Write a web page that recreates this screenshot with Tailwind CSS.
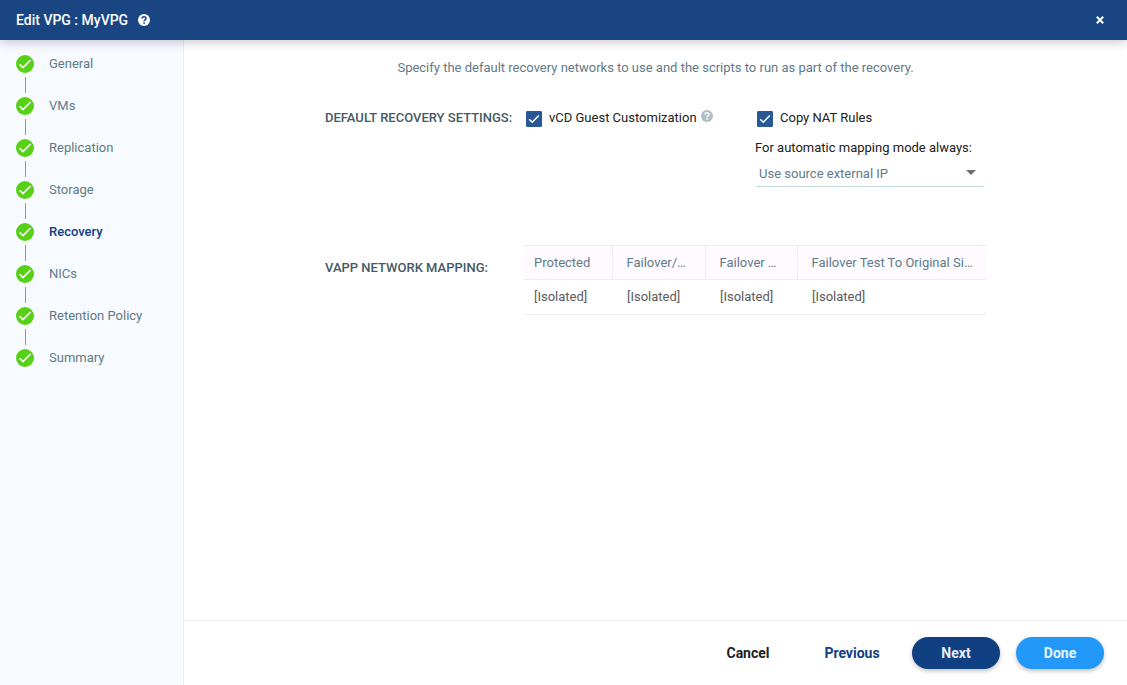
<!DOCTYPE html>
<html lang="en">
<head>
<meta charset="utf-8">
<meta name="viewport" content="width=device-width, initial-scale=1">
<title>Edit VPG : MyVPG</title>
<script src="https://cdn.jsdelivr.net/npm/@tailwindcss/browser@4"></script>
</head>
<body class="flex min-h-screen flex-col bg-white font-['Roboto',sans-serif] text-[13px] leading-5 text-[#212121]">
<svg class="hidden" aria-hidden="true">
  <symbol id="done" viewBox="0 0 18 18">
    <circle cx="9" cy="9" r="9" fill="#57d116"/>
    <path d="M3.6 9.2 7 12.6 14.6 5" fill="none" stroke="#fff" stroke-width="1.6"/>
  </symbol>
  <symbol id="help" viewBox="0 0 12 12">
    <circle cx="6" cy="6" r="6" fill="currentColor"/>
    <path d="M4 4.5C4.1 2.1 8 2.1 8 4.4 8 5.8 6.1 5.8 6.1 7.3M6.1 8.2V9.8" fill="none" stroke="var(--mark)" stroke-width="1.6"/>
  </symbol>
  <symbol id="tick" viewBox="0 0 16 16">
    <path d="M3.2 8.2 6.3 11.3 12.8 4.6" fill="none" stroke="#fff" stroke-width="1.5"/>
  </symbol>
</svg>

<header class="z-10 flex h-10 items-center bg-[#194683] pr-[19px] pl-4 text-white shadow-[0_2px_10px_rgba(40,20,50,0.25)]">
  <h1 class="text-sm font-medium">Edit VPG : MyVPG</h1>
  <button type="button" aria-label="Help" class="ml-2.5 [--mark:#194683]"><svg class="size-3"><use href="#help"/></svg></button>
  <button type="button" aria-label="Close" class="ml-auto flex size-4 items-center justify-center">
    <svg class="size-2" viewBox="0 0 8 8"><path d="M.8.8 7.2 7.2M7.2.8.8 7.2" stroke="#fff" stroke-width="2"/></svg>
  </button>
</header>

<div class="flex flex-1">
  <nav aria-label="Steps" class="w-46 shrink-0 border-r border-[#e9edf3] bg-[#f7faff] px-4 pt-[14px]">
    <ol class="text-[#5f7a88]">
      <li class="flex h-[42px] gap-[15px]"><span class="flex flex-col items-center gap-1"><svg class="mt-px size-[18px]"><use href="#done"/></svg><span class="h-4 w-px bg-[#8b9ba7]"></span></span><a href="#general">General</a></li>
      <li class="flex h-[42px] gap-[15px]"><span class="flex flex-col items-center gap-1"><svg class="mt-px size-[18px]"><use href="#done"/></svg><span class="h-4 w-px bg-[#8b9ba7]"></span></span><a href="#vms">VMs</a></li>
      <li class="flex h-[42px] gap-[15px]"><span class="flex flex-col items-center gap-1"><svg class="mt-px size-[18px]"><use href="#done"/></svg><span class="h-4 w-px bg-[#8b9ba7]"></span></span><a href="#replication">Replication</a></li>
      <li class="flex h-[42px] gap-[15px]"><span class="flex flex-col items-center gap-1"><svg class="mt-px size-[18px]"><use href="#done"/></svg><span class="h-4 w-px bg-[#8b9ba7]"></span></span><a href="#storage">Storage</a></li>
      <li class="flex h-[42px] gap-[15px]"><span class="flex flex-col items-center gap-1"><svg class="mt-px size-[18px]"><use href="#done"/></svg><span class="h-4 w-px bg-[#8b9ba7]"></span></span><a href="#recovery" aria-current="step" class="font-medium text-[#104082]">Recovery</a></li>
      <li class="flex h-[42px] gap-[15px]"><span class="flex flex-col items-center gap-1"><svg class="mt-px size-[18px]"><use href="#done"/></svg><span class="h-4 w-px bg-[#8b9ba7]"></span></span><a href="#nics">NICs</a></li>
      <li class="flex h-[42px] gap-[15px]"><span class="flex flex-col items-center gap-1"><svg class="mt-px size-[18px]"><use href="#done"/></svg><span class="h-4 w-px bg-[#8b9ba7]"></span></span><a href="#retention">Retention Policy</a></li>
      <li class="flex h-[42px] gap-[15px]"><span class="flex flex-col items-center"><svg class="mt-px size-[18px]"><use href="#done"/></svg></span><a href="#summary">Summary</a></li>
    </ol>
  </nav>

  <div class="flex min-w-0 flex-1 flex-col">
    <main class="flex-1 pt-[18px]">
      <p class="text-center text-[#5f7a88]">Specify the default recovery networks to use and the scripts to run as part of the recovery.</p>

      <div class="mx-auto max-w-[661px]">
        <section class="mt-[30px] flex">
          <h2 class="w-[199px] shrink-0 font-medium text-[#455a64]">DEFAULT RECOVERY SETTINGS:</h2>
          <div class="flex w-[231px] shrink-0 items-start pl-0.5">
            <label class="flex text-[#212121]">
              <span class="mt-[3px] mr-[7px] grid size-4"><input type="checkbox" checked class="peer col-start-1 row-start-1 size-4 appearance-none rounded-[1px] border border-[#285996] checked:bg-[#285996]"><svg class="pointer-events-none invisible col-start-1 row-start-1 size-4 peer-checked:visible"><use href="#tick"/></svg></span>
              vCD Guest Customization
            </label>
            <button type="button" aria-label="About guest customization" class="mt-0.5 ml-1 text-[#b0bec5] [--mark:#ffffff]"><svg class="size-3"><use href="#help"/></svg></button>
          </div>
          <div class="w-[229px]">
            <label class="flex pl-0.5 text-[#212121]">
              <span class="mt-[3px] mr-[7px] grid size-4"><input type="checkbox" checked class="peer col-start-1 row-start-1 size-4 appearance-none rounded-[1px] border border-[#285996] checked:bg-[#285996]"><svg class="pointer-events-none invisible col-start-1 row-start-1 size-4 peer-checked:visible"><use href="#tick"/></svg></span>
              Copy NAT Rules
            </label>
            <label for="mapping" class="mt-[10px] block text-[#212121]">For automatic mapping mode always:</label>
            <div class="relative ml-px">
              <select id="mapping" class="block h-[29px] w-full appearance-none border-b border-[#c5dadd] pt-1 pr-6 pl-[3px] text-[#5f7a88]"><option>Use source external IP</option></select>
              <svg class="pointer-events-none absolute top-3 right-2 h-[5px] w-[10px]" viewBox="0 0 10 5"><path d="M0 0H10L5 5Z" fill="#6f6f6f"/></svg>
            </div>
          </div>
        </section>

        <section class="mt-[58px] flex">
          <h2 class="w-[199px] shrink-0 pt-[13px] font-medium text-[#455a64]">VAPP NETWORK MAPPING:</h2>
          <table class="w-full table-fixed text-left">
            <colgroup><col class="w-[88px]"><col class="w-[93px]"><col class="w-[92px]"><col></colgroup>
            <thead>
              <tr class="h-[34px] border-y border-[#ebecf5] bg-[#fefaff] text-[#5f7a88]">
                <th class="truncate border-r border-[#ebecf5] pl-[10px] font-normal">Protected</th>
                <th class="truncate border-r border-[#ebecf5] px-[14px] font-normal">Failover/Move</th>
                <th class="truncate border-r border-[#ebecf5] px-[14px] font-normal">Failover Test</th>
                <th class="truncate pr-[10px] pl-[14px] font-normal">Failover Test To Original Site Network</th>
              </tr>
            </thead>
            <tbody>
              <tr class="h-[35px] border-b border-[#ebecf5] text-[#5a5a5a]">
                <td class="pl-[10px]">[Isolated]</td>
                <td class="pl-[15px]">[Isolated]</td>
                <td class="pl-[15px]">[Isolated]</td>
                <td class="pl-[15px]">[Isolated]</td>
              </tr>
            </tbody>
          </table>
        </section>
      </div>
    </main>

    <footer class="flex h-[65px] items-center justify-end gap-4 border-t border-[#eeeeee] pr-[23px] text-sm font-bold">
      <button type="button" class="h-8 w-22 text-[#212121]">Cancel</button>
      <button type="button" class="h-8 w-22 text-[#104082]">Previous</button>
      <button type="button" class="h-8 w-22 rounded-full bg-[#104082] text-[#e8edf5] shadow-[0_2px_4px_rgba(0,0,0,0.25)]">Next</button>
      <button type="button" class="h-8 w-22 rounded-full bg-[#2299f8] text-[#e8f4ff] shadow-[0_2px_4px_rgba(0,0,0,0.25)]">Done</button>
    </footer>
  </div>
</div>
</body>
</html>
